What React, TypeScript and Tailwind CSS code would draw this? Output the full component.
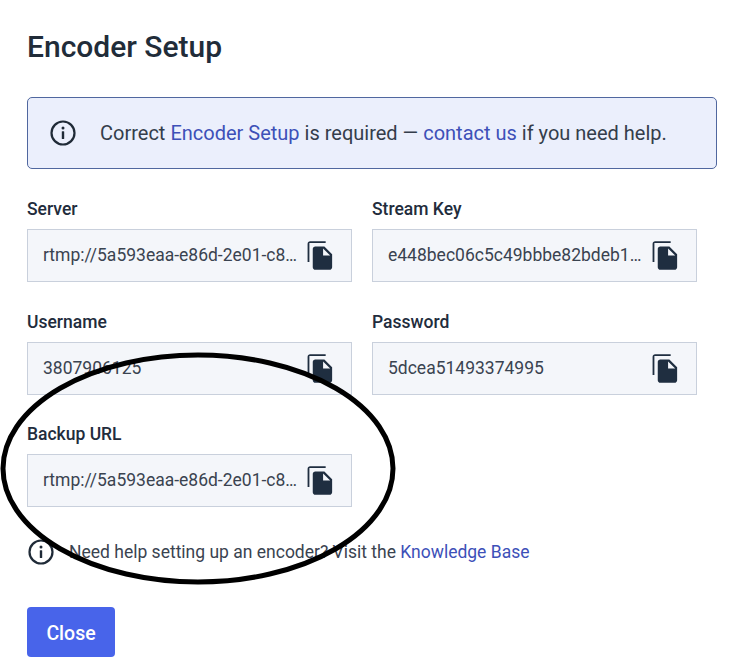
const font = { fontFamily: "Roboto, sans-serif" };

const fields = [
  { label: "Server", value: "rtmp://5a593eaa-e86d-2e01-c8f3-7b1d4e9a02c6.live" },
  { label: "Stream Key", value: "e448bec06c5c49bbbe82bdeb1f07a3d2c" },
  { label: "Username", value: "3807906125" },
  { label: "Password", value: "5dcea51493374995" },
  { label: "Backup URL", value: "rtmp://5a593eaa-e86d-2e01-c8f3-7b1d4e9a02c6.live" },
];

function InfoIcon({ className }: { className: string }) {
  return (
    <svg viewBox="0 0 26 26" className={className} fill="none">
      <circle cx="13" cy="13" r="11.5" stroke="#1f2a37" strokeWidth="2.2" />
      <circle cx="13" cy="8" r="1.5" fill="#1f2a37" />
      <rect x="11.8" y="11.2" width="2.4" height="7.8" rx="0.6" fill="#1f2a37" />
    </svg>
  );
}

function CopyIcon() {
  return (
    <svg viewBox="0 0 24 24" className="h-[31px] w-[31px] shrink-0" fill="#1f2e40">
      <path d="M16 1H4c-1.1 0-2 .9-2 2v14h1.4V2.4H16V1zm-1 4 6 6v10c0 1.1-.9 2-2 2H7.99C6.89 23 6 22.1 6 21l.01-14c0-1.1.89-2 1.99-2h7zm-1 7h5.5L14 6.5V12z" />
    </svg>
  );
}

function Field({ label, value }: { label: string; value: string }) {
  return (
    <div>
      <div className="mb-[11px] h-[18px] text-[17.5px] leading-[18px] font-medium text-[#222c3c]">{label}</div>
      <div className="flex h-[53px] items-center border border-[#c9d0dc] bg-[#f4f6fa] px-[15px]">
        <span className="min-w-0 flex-1 truncate text-[17.5px] text-[#3a4350]">{value}</span>
        <span className="ml-[5px]">
          <CopyIcon />
        </span>
      </div>
    </div>
  );
}

export default function App() {
  return (
    <div className="relative h-[667px] w-[742px] overflow-hidden bg-white pt-[28px] pl-[27px]" style={font}>
      <h1 className="text-[30px] leading-[38px] font-medium text-[#212c39]">Encoder Setup</h1>

      <div className="mt-[31px] flex h-[72px] w-[690px] items-center rounded-[5px] border border-[#50679f] bg-[#ebeffc] pl-[22px]">
        <InfoIcon className="h-[26px] w-[26px] shrink-0" />
        <p className="ml-[24px] text-[20px] text-[#343d4b]">
          Correct <span className="text-[#3d50b8]">Encoder Setup</span> is required —{" "}
          <span className="text-[#3d50b8]">contact us</span> if you need help.
        </p>
      </div>

      <div className="mt-[31px] grid w-[670px] grid-cols-[325px_325px] gap-x-[20px] gap-y-[30.5px]">
        {fields.map((f) => (
          <Field key={f.label} label={f.label} value={f.value} />
        ))}
      </div>

      <div className="mt-[32px] ml-px flex items-center">
        <InfoIcon className="h-[26px] w-[26px] shrink-0" />
        <p className="ml-[15px] text-[17.5px] text-[#3a4350]">
          Need help setting up an encoder? Visit the <span className="text-[#3d50b8]">Knowledge Base</span>
        </p>
      </div>

      <button className="mt-[42px] h-[50px] w-[88px] rounded-[4px] bg-[#4864ea] pt-[2px] text-[19.5px] font-medium text-white">
        Close
      </button>

      {/* hand drawn circle on top of the form */}
      <svg viewBox="0 0 400 240" className="absolute top-[349px] left-0 h-[240px] w-[400px]" fill="none">
        <ellipse cx="198" cy="119.5" rx="195" ry="113.5" stroke="#000" strokeWidth="5" />
      </svg>
    </div>
  );
}
